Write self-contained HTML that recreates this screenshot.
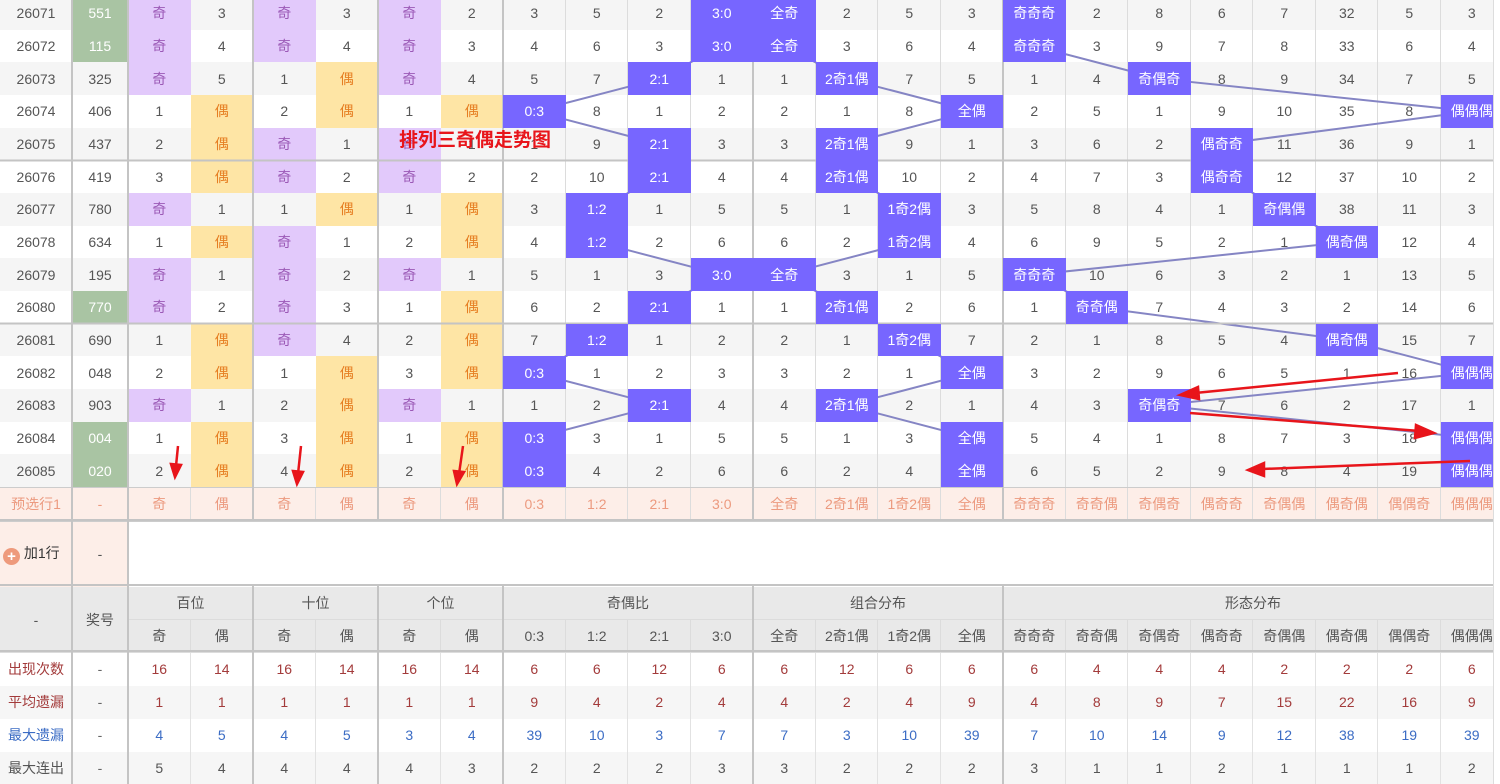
<!DOCTYPE html>
<html><head><meta charset="utf-8"><style>
body{margin:0;width:1500px;height:784px;overflow:hidden;background:#fff;position:relative;font-family:"Liberation Sans","Noto Sans CJK SC",sans-serif;}
#wrap{position:absolute;left:0;top:0;width:1493px;height:784px;overflow:hidden;}
table{position:absolute;left:0;top:-3px;width:1503px;table-layout:fixed;border-collapse:collapse;border-spacing:0;}
td{padding:0;text-align:center;font-size:14px;color:#555;white-space:nowrap;overflow:hidden;}
tr.d td{height:32.67px;}
tr.d:nth-child(odd){background:#f5f5f5;}
tr.d td.r{box-shadow:inset -1px 0 #dcdcdc;}
td.q{background:#e2c9fb;color:#9b59b6;}
td.o{background:#fee5a5;color:#e67e22;}
td.g{background:#a9c4a3;color:#fff;}
td.b{background:#7766ff;color:#fff;position:relative;z-index:2;}
tr.p td{height:33px;background:#fdeee8;color:#ec9a7f;box-shadow:inset -1px 0 #dcdcdc;border-top:1px solid #ccc;border-bottom:1px solid #ccc;}
tr.a td{height:65px;}
tr.h td{height:33px;background:#e9e9e9;color:#555;box-shadow:inset -1px 0 #dcdcdc,inset 0 -1px #dcdcdc;}
tr.s td{height:33px;box-shadow:inset -1px 0 #e2e2e2;background:#fff;}
tr.s.g2 td{background:#f6f6f6;}
tr.s1 td,tr.s2 td{color:#a33b3b;}
tr.s3 td{color:#3b6cc4;}
tr.s4 td{color:#555;}
tr.s td:nth-child(2){color:#666;}
svg{position:absolute;left:0;top:0;}
#lines{z-index:1;}
#top{z-index:3;}
</style></head><body><div id="wrap">
<table>
<colgroup><col style="width:72px"><col style="width:56px"><col span="22" style="width:62.5px"></colgroup>
<tbody>
<tr class="d"><td>26071</td><td class="g">551</td><td class="q">奇</td><td>3</td><td class="q">奇</td><td>3</td><td class="q">奇</td><td>2</td><td class="r">3</td><td class="r">5</td><td class="r">2</td><td class="b">3:0</td><td class="b">全奇</td><td class="r">2</td><td class="r">5</td><td class="r">3</td><td class="b">奇奇奇</td><td class="r">2</td><td class="r">8</td><td class="r">6</td><td class="r">7</td><td class="r">32</td><td class="r">5</td><td class="r">3</td></tr>
<tr class="d"><td>26072</td><td class="g">115</td><td class="q">奇</td><td>4</td><td class="q">奇</td><td>4</td><td class="q">奇</td><td>3</td><td class="r">4</td><td class="r">6</td><td class="r">3</td><td class="b">3:0</td><td class="b">全奇</td><td class="r">3</td><td class="r">6</td><td class="r">4</td><td class="b">奇奇奇</td><td class="r">3</td><td class="r">9</td><td class="r">7</td><td class="r">8</td><td class="r">33</td><td class="r">6</td><td class="r">4</td></tr>
<tr class="d"><td>26073</td><td>325</td><td class="q">奇</td><td>5</td><td>1</td><td class="o">偶</td><td class="q">奇</td><td>4</td><td class="r">5</td><td class="r">7</td><td class="b">2:1</td><td class="r">1</td><td class="r">1</td><td class="b">2奇1偶</td><td class="r">7</td><td class="r">5</td><td class="r">1</td><td class="r">4</td><td class="b">奇偶奇</td><td class="r">8</td><td class="r">9</td><td class="r">34</td><td class="r">7</td><td class="r">5</td></tr>
<tr class="d"><td>26074</td><td>406</td><td>1</td><td class="o">偶</td><td>2</td><td class="o">偶</td><td>1</td><td class="o">偶</td><td class="b">0:3</td><td class="r">8</td><td class="r">1</td><td class="r">2</td><td class="r">2</td><td class="r">1</td><td class="r">8</td><td class="b">全偶</td><td class="r">2</td><td class="r">5</td><td class="r">1</td><td class="r">9</td><td class="r">10</td><td class="r">35</td><td class="r">8</td><td class="b">偶偶偶</td></tr>
<tr class="d"><td>26075</td><td>437</td><td>2</td><td class="o">偶</td><td class="q">奇</td><td>1</td><td class="q">奇</td><td>1</td><td class="r">1</td><td class="r">9</td><td class="b">2:1</td><td class="r">3</td><td class="r">3</td><td class="b">2奇1偶</td><td class="r">9</td><td class="r">1</td><td class="r">3</td><td class="r">6</td><td class="r">2</td><td class="b">偶奇奇</td><td class="r">11</td><td class="r">36</td><td class="r">9</td><td class="r">1</td></tr>
<tr class="d"><td>26076</td><td>419</td><td>3</td><td class="o">偶</td><td class="q">奇</td><td>2</td><td class="q">奇</td><td>2</td><td class="r">2</td><td class="r">10</td><td class="b">2:1</td><td class="r">4</td><td class="r">4</td><td class="b">2奇1偶</td><td class="r">10</td><td class="r">2</td><td class="r">4</td><td class="r">7</td><td class="r">3</td><td class="b">偶奇奇</td><td class="r">12</td><td class="r">37</td><td class="r">10</td><td class="r">2</td></tr>
<tr class="d"><td>26077</td><td>780</td><td class="q">奇</td><td>1</td><td>1</td><td class="o">偶</td><td>1</td><td class="o">偶</td><td class="r">3</td><td class="b">1:2</td><td class="r">1</td><td class="r">5</td><td class="r">5</td><td class="r">1</td><td class="b">1奇2偶</td><td class="r">3</td><td class="r">5</td><td class="r">8</td><td class="r">4</td><td class="r">1</td><td class="b">奇偶偶</td><td class="r">38</td><td class="r">11</td><td class="r">3</td></tr>
<tr class="d"><td>26078</td><td>634</td><td>1</td><td class="o">偶</td><td class="q">奇</td><td>1</td><td>2</td><td class="o">偶</td><td class="r">4</td><td class="b">1:2</td><td class="r">2</td><td class="r">6</td><td class="r">6</td><td class="r">2</td><td class="b">1奇2偶</td><td class="r">4</td><td class="r">6</td><td class="r">9</td><td class="r">5</td><td class="r">2</td><td class="r">1</td><td class="b">偶奇偶</td><td class="r">12</td><td class="r">4</td></tr>
<tr class="d"><td>26079</td><td>195</td><td class="q">奇</td><td>1</td><td class="q">奇</td><td>2</td><td class="q">奇</td><td>1</td><td class="r">5</td><td class="r">1</td><td class="r">3</td><td class="b">3:0</td><td class="b">全奇</td><td class="r">3</td><td class="r">1</td><td class="r">5</td><td class="b">奇奇奇</td><td class="r">10</td><td class="r">6</td><td class="r">3</td><td class="r">2</td><td class="r">1</td><td class="r">13</td><td class="r">5</td></tr>
<tr class="d"><td>26080</td><td class="g">770</td><td class="q">奇</td><td>2</td><td class="q">奇</td><td>3</td><td>1</td><td class="o">偶</td><td class="r">6</td><td class="r">2</td><td class="b">2:1</td><td class="r">1</td><td class="r">1</td><td class="b">2奇1偶</td><td class="r">2</td><td class="r">6</td><td class="r">1</td><td class="b">奇奇偶</td><td class="r">7</td><td class="r">4</td><td class="r">3</td><td class="r">2</td><td class="r">14</td><td class="r">6</td></tr>
<tr class="d"><td>26081</td><td>690</td><td>1</td><td class="o">偶</td><td class="q">奇</td><td>4</td><td>2</td><td class="o">偶</td><td class="r">7</td><td class="b">1:2</td><td class="r">1</td><td class="r">2</td><td class="r">2</td><td class="r">1</td><td class="b">1奇2偶</td><td class="r">7</td><td class="r">2</td><td class="r">1</td><td class="r">8</td><td class="r">5</td><td class="r">4</td><td class="b">偶奇偶</td><td class="r">15</td><td class="r">7</td></tr>
<tr class="d"><td>26082</td><td>048</td><td>2</td><td class="o">偶</td><td>1</td><td class="o">偶</td><td>3</td><td class="o">偶</td><td class="b">0:3</td><td class="r">1</td><td class="r">2</td><td class="r">3</td><td class="r">3</td><td class="r">2</td><td class="r">1</td><td class="b">全偶</td><td class="r">3</td><td class="r">2</td><td class="r">9</td><td class="r">6</td><td class="r">5</td><td class="r">1</td><td class="r">16</td><td class="b">偶偶偶</td></tr>
<tr class="d"><td>26083</td><td>903</td><td class="q">奇</td><td>1</td><td>2</td><td class="o">偶</td><td class="q">奇</td><td>1</td><td class="r">1</td><td class="r">2</td><td class="b">2:1</td><td class="r">4</td><td class="r">4</td><td class="b">2奇1偶</td><td class="r">2</td><td class="r">1</td><td class="r">4</td><td class="r">3</td><td class="b">奇偶奇</td><td class="r">7</td><td class="r">6</td><td class="r">2</td><td class="r">17</td><td class="r">1</td></tr>
<tr class="d"><td>26084</td><td class="g">004</td><td>1</td><td class="o">偶</td><td>3</td><td class="o">偶</td><td>1</td><td class="o">偶</td><td class="b">0:3</td><td class="r">3</td><td class="r">1</td><td class="r">5</td><td class="r">5</td><td class="r">1</td><td class="r">3</td><td class="b">全偶</td><td class="r">5</td><td class="r">4</td><td class="r">1</td><td class="r">8</td><td class="r">7</td><td class="r">3</td><td class="r">18</td><td class="b">偶偶偶</td></tr>
<tr class="d"><td>26085</td><td class="g">020</td><td>2</td><td class="o">偶</td><td>4</td><td class="o">偶</td><td>2</td><td class="o">偶</td><td class="b">0:3</td><td class="r">4</td><td class="r">2</td><td class="r">6</td><td class="r">6</td><td class="r">2</td><td class="r">4</td><td class="b">全偶</td><td class="r">6</td><td class="r">5</td><td class="r">2</td><td class="r">9</td><td class="r">8</td><td class="r">4</td><td class="r">19</td><td class="b">偶偶偶</td></tr>
<tr class="p"><td>预选行1</td><td>-</td><td>奇</td><td>偶</td><td>奇</td><td>偶</td><td>奇</td><td>偶</td><td>0:3</td><td>1:2</td><td>2:1</td><td>3:0</td><td>全奇</td><td>2奇1偶</td><td>1奇2偶</td><td>全偶</td><td>奇奇奇</td><td>奇奇偶</td><td>奇偶奇</td><td>偶奇奇</td><td>奇偶偶</td><td>偶奇偶</td><td>偶偶奇</td><td>偶偶偶</td></tr>
<tr class="a"><td style="background:#fdeee8;color:#333;text-align:left;padding-left:3px"><span style="display:inline-block;width:17px;height:17px;border-radius:50%;background:#ee9a7c;color:#fff;font-size:15px;line-height:17px;text-align:center;vertical-align:-3px;font-weight:bold">+</span> 加1行</td><td style="background:#fdeee8">-</td><td colspan="22"></td></tr>
<tr class="h"><td rowspan="2">-</td><td rowspan="2">奖号</td><td colspan="2">百位</td><td colspan="2">十位</td><td colspan="2">个位</td><td colspan="4">奇偶比</td><td colspan="4">组合分布</td><td colspan="8">形态分布</td></tr>
<tr class="h"><td>奇</td><td>偶</td><td>奇</td><td>偶</td><td>奇</td><td>偶</td><td>0:3</td><td>1:2</td><td>2:1</td><td>3:0</td><td>全奇</td><td>2奇1偶</td><td>1奇2偶</td><td>全偶</td><td>奇奇奇</td><td>奇奇偶</td><td>奇偶奇</td><td>偶奇奇</td><td>奇偶偶</td><td>偶奇偶</td><td>偶偶奇</td><td>偶偶偶</td></tr>
<tr class="s s1"><td>出现次数</td><td>-</td><td>16</td><td>14</td><td>16</td><td>14</td><td>16</td><td>14</td><td>6</td><td>6</td><td>12</td><td>6</td><td>6</td><td>12</td><td>6</td><td>6</td><td>6</td><td>4</td><td>4</td><td>4</td><td>2</td><td>2</td><td>2</td><td>6</td></tr>
<tr class="s s2 g2"><td>平均遗漏</td><td>-</td><td>1</td><td>1</td><td>1</td><td>1</td><td>1</td><td>1</td><td>9</td><td>4</td><td>2</td><td>4</td><td>4</td><td>2</td><td>4</td><td>9</td><td>4</td><td>8</td><td>9</td><td>7</td><td>15</td><td>22</td><td>16</td><td>9</td></tr>
<tr class="s s3"><td>最大遗漏</td><td>-</td><td>4</td><td>5</td><td>4</td><td>5</td><td>3</td><td>4</td><td>39</td><td>10</td><td>3</td><td>7</td><td>7</td><td>3</td><td>10</td><td>39</td><td>7</td><td>10</td><td>14</td><td>9</td><td>12</td><td>38</td><td>19</td><td>39</td></tr>
<tr class="s s4 g2"><td>最大连出</td><td>-</td><td>5</td><td>4</td><td>4</td><td>4</td><td>4</td><td>3</td><td>2</td><td>2</td><td>2</td><td>3</td><td>3</td><td>2</td><td>2</td><td>2</td><td>3</td><td>1</td><td>1</td><td>2</td><td>1</td><td>1</td><td>1</td><td>2</td></tr>
</tbody></table>
<svg id="lines" width="1500" height="784">
<g fill="none" stroke="#8585c4" stroke-width="2">
<polyline points="721.75,13.3 721.75,46 659.25,78.7 534.25,111.3 659.25,144 659.25,176.7 596.75,209.3 596.75,242 721.75,274.7 659.25,307.3 596.75,340 534.25,372.7 659.25,405.3 534.25,438 534.25,470.7"/>
<polyline points="784.25,13.3 784.25,46 846.75,78.7 971.75,111.3 846.75,144 846.75,176.7 909.25,209.3 909.25,242 784.25,274.7 846.75,307.3 909.25,340 971.75,372.7 846.75,405.3 971.75,438 971.75,470.7"/>
<polyline points="1034.25,13.3 1034.25,46 1159.25,78.7 1471.75,111.3 1221.75,144 1221.75,176.7 1284.25,209.3 1346.75,242 1034.25,274.7 1096.75,307.3 1346.75,340 1471.75,372.7 1159.25,405.3 1471.75,438 1471.75,470.7"/>
</g>
<g stroke="#c4c4c4" stroke-width="2">
<line x1="72" y1="0" x2="72" y2="784"/><line x1="128" y1="0" x2="128" y2="784"/>
<line x1="253" y1="0" x2="253" y2="520"/><line x1="378" y1="0" x2="378" y2="520"/><line x1="503" y1="0" x2="503" y2="520"/><line x1="753" y1="0" x2="753" y2="520"/><line x1="1003" y1="0" x2="1003" y2="520"/>
<line x1="253" y1="585" x2="253" y2="784"/><line x1="378" y1="585" x2="378" y2="784"/><line x1="503" y1="585" x2="503" y2="784"/><line x1="753" y1="585" x2="753" y2="784"/><line x1="1003" y1="585" x2="1003" y2="784"/>
<line x1="0" y1="160.5" x2="1493" y2="160.5"/><line x1="0" y1="323.5" x2="1493" y2="323.5"/>
<line x1="0" y1="520" x2="1493" y2="520"/><line x1="0" y1="585" x2="1493" y2="585"/><line x1="0" y1="651" x2="1493" y2="651"/>
</g>
</svg>
<svg id="top" width="1500" height="784">
<text x="399" y="146" font-family="Liberation Sans,Noto Sans CJK SC,sans-serif" font-size="19" font-weight="bold" fill="#e8151b">排列三奇偶走势图</text>
<g stroke="#e8151b" stroke-width="2.5" fill="#e8151b">
<line x1="178" y1="446" x2="176" y2="466"/><polygon points="171,464 181,465 175,477"/>
<line x1="301" y1="446" x2="298" y2="474"/><polygon points="293,471 303,472 297,484"/>
<line x1="463" y1="446" x2="459" y2="474"/><polygon points="454,471 464,472 457,484"/>
<line x1="1398" y1="373" x2="1195" y2="393"/><polygon points="1180,395 1198,387 1199,399"/>
<line x1="1190" y1="413" x2="1420" y2="431"/><polygon points="1434,433 1416,425 1415,438"/>
<line x1="1470" y1="461" x2="1262" y2="469"/><polygon points="1248,470 1264,463 1264,476"/>
</g>
</svg>
</div>
<div style="position:absolute;left:1493px;top:0;width:1px;height:784px;background:#ddd"></div>
</body></html>
